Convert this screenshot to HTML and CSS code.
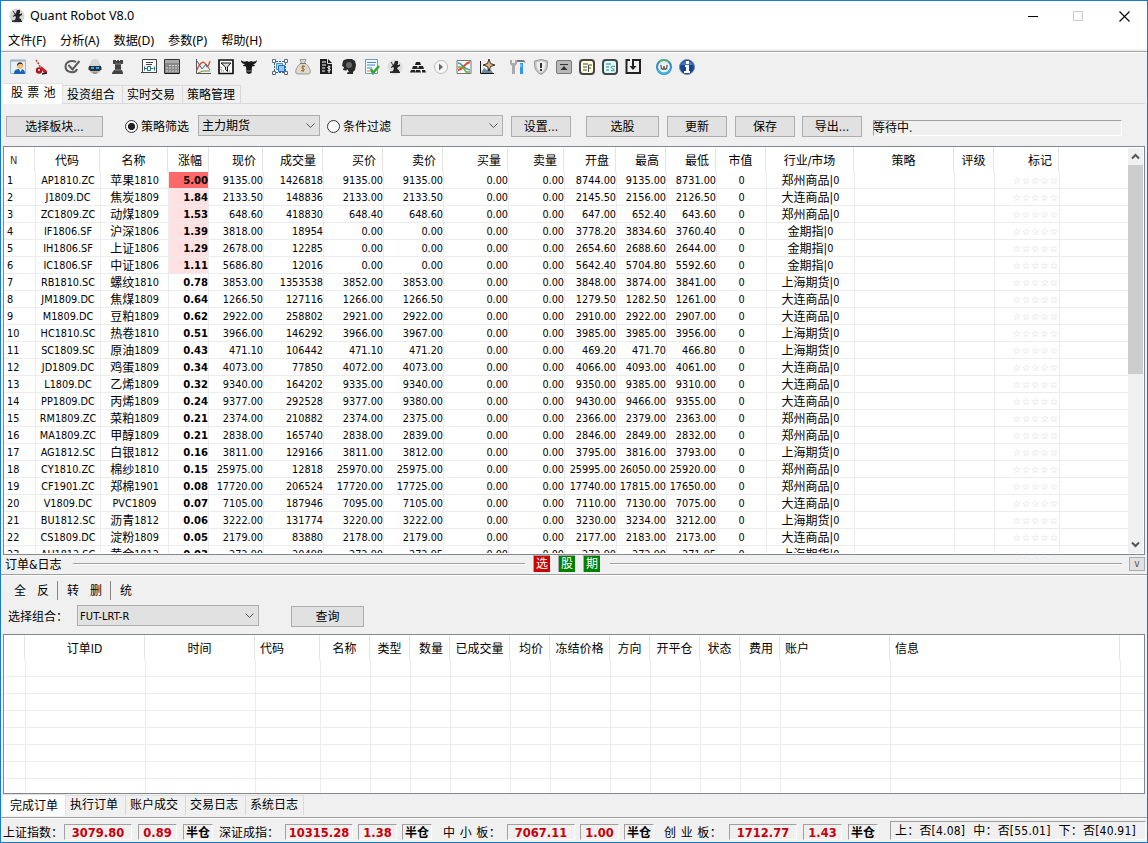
FILE: index.html
```html
<!DOCTYPE html>
<html lang="zh-CN">
<head>
<meta charset="utf-8">
<title>Quant Robot V8.0</title>
<link rel="stylesheet" href="styles.css">
</head>
<body>
<div class="window">
  <header class="titlebar">
    <svg class="app-icon" viewBox="0 0 16 16"><circle cx="8" cy="8" r="7.500" fill="#d6d6d6"/><path d="M8 2h3v3l-1 1h2l1-1v2l-2 1-1 2 2 1v2h1v1H3v-1l3-1 1-3-1-1-2 1V8l2-2 1-1z" fill="#222"/><path d="M4 3l2 3M3 13h10" stroke="#333" fill="none"/></svg>
    <span class="title">Quant Robot V8.0</span>
    <svg class="sys min" viewBox="0 0 11 11"><path d="M0 5.500h10" stroke="#000" fill="none"/></svg>
    <svg class="sys max" viewBox="0 0 11 11"><path d="M.5.500h9v9h-9z" stroke="#ccc" fill="none"/></svg>
    <svg class="sys close" viewBox="0 0 11 11"><path d="M.5.500l10 10M10.500.500l-10 10" stroke="#000" stroke-width="1.100" fill="none"/></svg>
  </header>
  <nav class="menu"><span>文件(F)</span><span>分析(A)</span><span>数据(D)</span><span>参数(P)</span><span>帮助(H)</span></nav>
  <div class="toolbar">
    <div class="group">
      <svg viewBox="0 0 16 16"><path d="M.5 1.500h15v13H.5z" fill="#e8f1f8" stroke="#9fb4c4"/><path d="M.5.500h15v2H.5z" fill="#9fb0bd"/><path d="M4 15c0-4 2-5 6-5s5 2 5 5z" fill="#1763b5"/><path d="M9 10l1.500 3L12 10z" fill="#fff"/><circle cx="10" cy="7" r="3" fill="#f0bd72"/><path d="M7 7c-.5-5 6.500-5 6 0l-1-2H9z" fill="#48301c"/></svg>
      <svg viewBox="0 0 16 16"><path d="M3 1l2 3 3 5" stroke="#c33" stroke-width="1.500" stroke-dasharray="2 1" fill="none"/><circle cx="6" cy="11.500" r="3.200" fill="#b5121b"/><circle cx="6" cy="11" r="1" fill="#fff"/><path d="M8 7l6 5v3l-3-1-3-4z" fill="#c4202a"/><path d="M9 15l5-1" stroke="#222" stroke-width="1.500"/></svg>
    </div>
    <div class="group">
      <svg viewBox="0 0 16 16"><path d="M12 3C9 1 2 1.500 1.500 7.500c0 6.500 10 7.500 11.500 2.500" fill="none" stroke="#5b5b5b" stroke-width="2"/><path d="M4.500 6l4 4.500L15.500 2" fill="none" stroke="#5b5b5b" stroke-width="2"/></svg>
      <svg viewBox="0 0 16 16"><circle cx="8" cy="9" r="6" fill="#b5b5b5"/><circle cx="8" cy="4.500" r="4.500" fill="#d8d8d8"/><path d="M1 8h14v3H1z" fill="#999"/><path d="M2 7h12v4l-2 1H4l-2-1z" fill="#283038"/><path d="M4 8h3v2H4zm5 0h3v2H9z" fill="#27aef2"/><path d="M6 14h4" stroke="#777"/></svg>
      <svg viewBox="0 0 16 16"><path d="M3 1h3v1h1V1h2v1h1V1h3v4h-2v6h1l1 3v1H2v-1l2-3h1V5H3z" fill="#424242"/><path d="M5 5h6M5 11h6" stroke="#888"/></svg>
    </div>
    <div class="group">
      <svg viewBox="0 0 16 16"><path d="M1.500.500h14v13h-14z" fill="#fff" stroke="#444"/><path d="M0 13.500h4m9 0h3M5 3.500h7M5 5.500h6" stroke="#444"/><path d="M3.500 7.500v4m0-2h3m0-2v4h3v-4h-3m3 2h3m1-2v4" stroke="#26777a" fill="none"/></svg>
      <svg viewBox="0 0 16 16"><path d="M.5.500h15v14H.5z" fill="#888" stroke="#333"/><path d="M1 1h14v3H1z" fill="#aaa"/><path d="M5 6.500h10M2 9h13M2 12h13" stroke="#ddd" stroke-dasharray="2 1"/><path d="M1 14.500h14" stroke="#111"/></svg>
    </div>
    <div class="group">
      <svg viewBox="0 0 16 16"><path d="M1.500 0v14.500H16" stroke="#555" fill="none"/><path d="M2 11c3-8 7-10 9-5 1 4 3 0 4-4" stroke="#e04c2d" stroke-width="1.300" fill="none"/><path d="M2 2l5 8 4-5 4 6" stroke="#27729d" fill="none"/><path d="M3 14l5-2h7" stroke="#6c8f36" fill="none"/></svg>
      <svg viewBox="0 0 16 16"><path d="M1 1h14v13.500H1z" stroke="#111" stroke-width="1.700" fill="#fff"/><path d="M3 4h10L9.500 8v4.500l-2-2V8z" stroke="#111" fill="#ddd"/><path d="M3 8v4h3m5 0h2" stroke="#666" fill="none" stroke-dasharray="1 1"/></svg>
      <svg viewBox="0 0 16 16"><path d="M0 1c2 2 4 2 6 1l2 1 2-1c2 1 4 1 6-1-.2 3-2 4-4 4 1 1 2 1 2 2l-3 .5L10.500 14 8 15l-2.500-1L5 7.500 2 7c0-1 1-1 2-2C2 5 0 4 0 1z" fill="#171717"/><path d="M6 12h4" stroke="#888"/></svg>
    </div>
    <div class="group">
      <svg viewBox="0 0 16 16"><path d="M4 2.500h8M4 13.500h8M2.500 4v8m11-8v8" stroke="#456682" stroke-dasharray="2 1" fill="none"/><path d="M4.500 4.500h6v6h-6z" fill="#b5def2" stroke="#4a96c0"/><path d="M6.500 6.500h6v6h-6z" fill="#9bc9f2" stroke="#1d70c4"/><path d="M.5.500h3v3h-3zm12 0h3v3h-3zm-12 12h3v3h-3zm12 0h3v3h-3z" fill="#fff" stroke="#5a6b7d"/></svg>
      <svg viewBox="0 0 16 16"><path d="M5 .5h6L9.500 4C14 6 18 15 13 15H3C-2 15 2 6 6.500 4z" fill="#ddd9cd" stroke="#999"/><path d="M5 4.500h6" stroke="#777"/><path d="M10 7.500c-4-1-4 1.500-2 2s2 3-2 2M8 6v7" stroke="#9c6424" fill="none"/></svg>
      <svg viewBox="0 0 16 16"><path d="M2 0h8l4 4v11H2z" fill="#1d1d1d"/><path d="M4 3h4M4 6h4M4 9h3M4 12h3" stroke="#fff"/><path d="M9.500 0v4.500H14" stroke="#ddd" fill="none"/><path d="M12.500 8c-3.500-1-3.500 1-1.500 1.500s2 3-1.500 2M11 6.500V14" stroke="#fff" fill="none"/></svg>
      <svg viewBox="0 0 16 16"><path d="M3 1l3-1h5l3 2 1 4-1 5-2 2v2H6l1-3-5-1 1-3-2-1 1-5z" fill="#292929"/><circle cx="8" cy="6" r="3" fill="#686868"/><path d="M6 10l-1 3h3" fill="#f0f0f0"/></svg>
      <svg viewBox="0 0 16 16"><path d="M1.500.500h12v14h-12z" fill="#eff7ff" stroke="#739bc1"/><path d="M3 3.500h9M3 6h8M3 9h5" stroke="#4d87bd"/><path d="M3 12h4" stroke="#d84"/><path d="M7 10l2 4 6-7" stroke="#39a638" stroke-width="2.500" fill="none"/></svg>
      <svg viewBox="0 0 16 16"><circle cx="8" cy="8" r="7.500" fill="#ddd"/><path d="M8 2h3v3l-1 1h2l1-1v2l-2 1-1 2 2 1v2h1v1H3v-1l3-1 1-3-1-1-2 1V8l2-2 1-1z" fill="#222"/><path d="M4 3l2 3M3 13h10" stroke="#333"/></svg>
      <svg viewBox="0 0 16 16"><path d="M6 3h4l1 3H5zM3 7h4l1 3H2zm6 0h4l1 3H8zM1 11h4l1 2.500H0zm5 0h4l1 2.500H6zm6 0h3l1 2.500h-4z" fill="#222"/></svg>
      <svg viewBox="0 0 16 16"><circle cx="8" cy="8" r="6.500" fill="#f7f7f7" stroke="#bbb"/><path d="M6 4.500l4 3.500-4 3.500z" fill="#666"/></svg>
      <svg viewBox="0 0 16 16"><path d="M1 1.500h14v13H1z" fill="#fff" stroke="#777"/><path d="M2 4c5 0 5 6 12 7" stroke="#3399bd" stroke-width="1.500" fill="none"/><path d="M2 11c5 0 6-7 12-8" stroke="#e3482d" stroke-width="2" fill="none"/><path d="M2 8h5l3 5h4" stroke="#6bad37" stroke-width="1.500" fill="none"/></svg>
      <svg viewBox="0 0 16 16"><path d="M1.500 2v12.500H15" stroke="#111" fill="none"/><path d="M2 14l3-5 3 2 2-3 4 6z" fill="#6f899a"/><path d="M10 0l1.500 4.500L16 6l-4.500 1.500L10 12 8.500 7.500 4 6l4.500-1.500z" fill="#deb176" stroke="#111" stroke-width=".8"/></svg>
    </div>
    <div class="group">
      <svg viewBox="0 0 16 16"><path d="M0 1v4l2 2v8h3V7l2-2V1H5v3H2V1z" fill="#aaa"/><path d="M7 1h7l2 3-2-1H7z" fill="#777"/><path d="M10 4h3v11h-3z" fill="#3098ea"/><path d="M11 5v3" stroke="#b8dbf6"/></svg>
      <svg viewBox="0 0 16 16"><path d="M8 .5L14.500 2c0 6 0 10-6.500 13.500C1.500 12 1.500 8 1.500 2z" fill="#c6c6c6" stroke="#999"/><path d="M8 2l4.500 1.500C12.500 8 12 11 8 13.500 4 11 3.500 8 3.500 3.500z" fill="#eee"/><path d="M8 4v5m0 1v2" stroke="#333" stroke-width="2"/></svg>
      <svg viewBox="0 0 16 16"><rect x=".5" y="1.500" width="15" height="13" rx="1.500" fill="#b8b8b8" stroke="#777"/><path d="M4 5.500h8" stroke="#333"/><path d="M4.500 11h7L8 7z" fill="#333"/></svg>
      <svg viewBox="0 0 16 16"><rect x="1" y="1" width="14" height="14" rx="3" fill="#ffffdb" stroke="#444" stroke-width="2"/><path d="M4 5h5M4 8h4M4 11h4M9.500 13V6H13M9.500 9H12" stroke="#444" fill="none"/></svg>
      <svg viewBox="0 0 16 16"><rect x="1" y="1" width="14" height="14" rx="3" fill="#dafffe" stroke="#444" stroke-width="2"/><path d="M4 5h5M4 8h3M4 11h3M13 7.500c-4-1-5 1-2.500 2s3 3-1.500 2" stroke="#36787e" fill="none"/></svg>
      <svg viewBox="0 0 16 16"><path d="M5 1H1.500v13H15V1H8v7" stroke="#222" stroke-width="2" fill="none"/><path d="M4.500 7h7L8 11z" fill="#222"/></svg>
    </div>
    <div class="group">
      <svg viewBox="0 0 16 16"><circle cx="8" cy="8" r="7" fill="#eee" stroke="#2d8bd0" stroke-width="2"/><path d="M2 10c2 6 10 6 12 0" stroke="#3cb2de" stroke-width="2" fill="none"/><path d="M3 3c3-3 8-2 10 0" stroke="#60b95b" stroke-width="1.500" fill="none"/><path d="M5 6c0 6 3 5 3 1 0 4 3 5 3-1" stroke="#555" stroke-width="1.300" fill="none"/></svg>
      <svg viewBox="0 0 16 16"><circle cx="8" cy="8" r="7.500" fill="#17468d" stroke="#6d8eb8"/><path d="M2 6c1-5 11-5 12 0z" fill="#4978b3"/><path d="M7 2h3v3H7zM6 6h4v6h1v2H5v-2h2V8H6z" fill="#fff"/></svg>
    </div>
  </div>
  <div class="tabs"><span class="tab active first">股 票 池</span><span class="tab">投资组合</span><span class="tab">实时交易</span><span class="tab last">策略管理</span><span class="tabline"></span></div>
  <div class="filters">
    <span class="button w97">选择板块...</span>
    <span class="radio on"></span><span class="radio-label">策略筛选</span>
    <span class="select w122">主力期货<svg viewBox="0 0 9 5"><path d="M.5.500l4 4 4-4" fill="none" stroke="#555"/></svg></span>
    <span class="radio second"></span><span class="radio-label">条件过滤</span>
    <span class="select w102 blank"><svg viewBox="0 0 9 5"><path d="M.5.500l4 4 4-4" fill="none" stroke="#555"/></svg></span>
    <span class="button w60 b1">设置...</span><span class="button w73 b2">选股</span><span class="button w60 b1">更新</span><span class="button w60 b1">保存</span><span class="button w60 b3">导出...</span>
    <span class="sunken state">等待中.</span>
  </div>
  <div class="list quotes">
    <div class="list-main">
      <div class="head qgrid"><span class="n">N</span><span class="c">代码</span><span class="c">名称</span><span>涨幅</span><span>现价</span><span>成交量</span><span>买价</span><span>卖价</span><span>买量</span><span>卖量</span><span>开盘</span><span>最高</span><span>最低</span><span class="c">市值</span><span class="c">行业/市场</span><span class="c">策略</span><span class="c">评级</span><span>标记</span></div>
      <div class="body" id="quotes"></div>
    </div>
    <div class="scroll"><svg viewBox="0 0 15 17"><path d="M4 10.500L7.500 7l3.500 3.500" fill="none" stroke="#555" stroke-width="2"/></svg><div class="thumb"></div><svg class="down" viewBox="0 0 15 17"><path d="M4 6.500L7.500 10 11 6.500" fill="none" stroke="#555" stroke-width="2"/></svg></div>
  </div>
  <div class="splitter"><span class="split-name">订单&amp;日志</span><span class="rule r1"></span><span class="badge red">选</span><span class="badge">股</span><span class="badge">期</span><span class="rule r2"></span><span class="fold">v</span></div>
  <div class="minibar"><span>全</span><span>反</span><i></i><span>转</span><span>删</span><i></i><span>统</span></div>
  <div class="query"><span class="query-label">选择组合：</span><span class="select w182">FUT-LRT-R<svg viewBox="0 0 9 5"><path d="M.5.500l4 4 4-4" fill="none" stroke="#555"/></svg></span><span class="button w73 qbtn">查询</span></div>
  <div class="list orders">
    <div class="list-main">
      <div class="head ogrid"><span></span><span class="c">订单ID</span><span class="c">时间</span><span class="l">代码</span><span class="c">名称</span><span class="c">类型</span><span>数量</span><span class="c">已成交量</span><span>均价</span><span class="c">冻结价格</span><span class="c">方向</span><span class="c">开平仓</span><span class="c">状态</span><span>费用</span><span class="l">账户</span><span class="l">信息</span></div>
      <div class="body" id="orders"></div>
    </div>
  </div>
  <div class="tabs bottom"><span class="tab active">完成订单</span><span class="tab">执行订单</span><span class="tab">账户成交</span><span class="tab">交易日志</span><span class="tab last">系统日志</span></div>
  <footer class="status">
    <div class="index sh"><span class="name">上证指数：</span><b class="sunken val">3079.80</b><b class="sunken chg">0.89</b><b class="sunken pos">半仓</b></div>
    <div class="index sz"><span class="name">深证成指：</span><b class="sunken val">10315.28</b><b class="sunken chg">1.38</b><b class="sunken pos">半仓</b></div>
    <div class="index zx"><span class="name">中 小 板：</span><b class="sunken val">7067.11</b><b class="sunken chg">1.00</b><b class="sunken pos">半仓</b></div>
    <div class="index cy"><span class="name">创 业 板：</span><b class="sunken val">1712.77</b><b class="sunken chg">1.43</b><b class="sunken pos">半仓</b></div>
    <span class="sunken summary"><span>上：否[4.08]</span><span>中：否[55.01]</span><span>下：否[40.91]</span></span>
  </footer>
</div>
<script src="app.js"></script>
</body>
</html>
```
FILE: styles.css
```css
* { box-sizing: border-box; }
body { margin: 0; }
.window {
  width: 1148px; height: 843px; overflow: hidden;
  display: flex; flex-direction: column;
  border: 1px solid #1979ca;
  background: #f0f0f0; color: #000;
  font: 12px/16px "DejaVu Sans Condensed", "Noto Sans CJK SC", sans-serif;
  white-space: nowrap;
}
svg { display: block; flex: none; }

.titlebar { height: 30px; flex: none; display: flex; align-items: center; padding: 0 13px 0 8px; background: #fff; }
.app-icon { width: 16px; height: 16px; }
.title { margin-left: 5px; flex: 1; font: 12.600px/16px "Noto Sans", sans-serif; }
.sys { width: 11px; height: 11px; }
.max { margin-left: 34px; }
.close { margin-left: 35px; margin-right: 4px; }
.menu { height: 18px; flex: none; padding-left: 7px; display: flex; gap: 14px; background: #fff; font: 12.200px/20px "Noto Sans", "Noto Sans CJK SC", sans-serif; }

.toolbar { height: 35px; flex: none; margin-top: 2px; padding: 7px 0 0 9px; display: flex; gap: 15px; border-top: 1px solid #a0a0a0; box-shadow: inset 0 1px #fff; }
.group { display: flex; gap: 7px; }
.group svg { width: 16px; height: 16px; }

.tabs { display: flex; height: 20px; flex: none; margin-top: -2px; padding-left: 2px; align-items: flex-end; }
.tab { width: 60px; height: 19px; padding-left: 4px; line-height: 19px; border: 1px solid #d9d9d9; border-left: 0; }
.tab.active { height: 21px; background: #fff; border-color: #e3e3e3; border-bottom: 0; }
.tab.first { width: 60px; padding-left: 8px; letter-spacing: .4px; }
.tab.last { width: 58px; }
.tabline { flex: 1; margin-right: 2px; border-bottom: 1px solid #d9d9d9; }

.filters { height: 42px; flex: none; padding: 12px 0 0 5px; display: flex; align-items: flex-start; }
.button { height: 21px; flex: none; border: 1px solid #adadad; background: #e1e1e1; line-height: 20px; text-align: center; }
.select { height: 21px; flex: none; border: 1px solid #adadad; background: #e1e1e1; padding: 0 4px 0 3px; display: flex; justify-content: space-between; line-height: 20px; }
.select svg { width: 9px; height: 5px; align-self: center; }
.select.blank { justify-content: flex-end; }
.w97 { width: 97px; } .w60 { width: 60px; } .w73 { width: 73px; }
.w122 { width: 122px; } .w102 { width: 102px; }
.w182 { width: 182px; font-size: 11px; letter-spacing: .1px; line-height: 21px; padding-left: 2px; }
.radio { width: 13px; height: 13px; margin: 4px 3px 0 22px; border: 1px solid #333; border-radius: 50%; background: #fff; flex: none; }
.radio.on { background: radial-gradient(circle, #222 0 3.200px, #fff 4px); }
.radio.second { margin-left: 7px; }
.radio-label { width: 57px; margin-top: 3px; flex: none; }
.filters .select { margin-top: -1px; }
.filters .blank { margin-left: 1px; }
.b1 { margin-left: 8px; } .b2 { margin-left: 15px; } .b3 { margin-left: 7px; }
.sunken { border: 1px solid #a0a0a0; border-right-color: #fff; border-bottom-color: #fff; }
.state { width: 249px; height: 16px; margin: 4px 0 0 11px; line-height: 15px; text-indent: -1px; }

.list { margin: 0 2px; border: 1px solid #828790; background: #fff; display: flex; overflow: hidden; flex: none; }
.quotes { height: 409px; padding-bottom: 1px; }
.list-main { flex: 1; overflow: hidden; }
.head { display: grid; height: 25px; }
.head span { border-right: 1px solid #e5e5e5; padding-right: 6px; line-height: 28px; text-align: right; overflow: hidden; }
.head .c { text-align: center; padding: 0; }
.head .l { text-align: left; padding-left: 5px; }
.head .n { color: #5c2a14; text-align: left; padding-left: 6px; font-size: 11px; }
.qgrid { grid-template-columns: 31px 65px 68px 41px 54px 60px 60px 60px 65px 56px 52px 50px 50px 50px 88px 100px 40px 65px; }
.ogrid { grid-template-columns: 21px 120px 110px 65px 50px 40px 40px 60px 40px 60px 40px 50px 40px 40px 110px 230px; }
.row { display: grid; height: 17px; padding-left: 1px; border-bottom: 1px solid #ececec; }
.row.qgrid { grid-template-columns: 31px 65px 68px 40px 55px 60px 60px 60px 65px 56px 52px 50px 50px 50px 88px 100px 40px 65px; }
.row span { border-right: 1px solid #ececec; height: 17px; line-height: 18px; font-size: 10.800px; text-align: right; }
.row .num { text-align: left; padding-left: 2px; }
.row .c { text-align: center; }
.row .market, .row .label { font-size: 12px; }
.row small { font-size: 10.800px; line-height: 0; vertical-align: 1px; }
.row .pct { font-weight: bold; font-size: 11.200px; }
.row .hot, .row .warm { height: 16px; }
.row .hot { background: #ff6868; }
.row .warm { background: #ffe1e1; }
.row .stars { color: #d4d4d8; font-size: 9.500px; font-family: "DejaVu Sans", sans-serif; letter-spacing: .800px; }
.scroll { width: 15px; margin: 1px 1px 0 0; background: #f0f0f0; display: flex; flex-direction: column; }
.scroll svg { width: 15px; height: 17px; }
.thumb { height: 209px; background: #cdcdcd; }
.down { margin-top: auto; }

.splitter { height: 20px; display: flex; align-items: flex-start; padding-left: 4px; border-bottom: 1px solid #a0a0a0; box-shadow: 0 1px #fff; flex: none; }
.split-name { width: 68px; line-height: 20px; }
.rule { height: 2px; margin-top: 8px; border-top: 1px solid #a0a0a0; border-bottom: 1px solid #fff; }
.r1 { width: 452px; margin-right: 8px; }
.r2 { width: 512px; margin-left: 2px; }
.badge { width: 17px; height: 17px; margin-right: 8px; line-height: 17px; text-align: center; background: #008000; color: #fff; border: 1px solid #aaa; border-width: 1px 0 0 1px; }
.badge.red { background: #cc0000; }
.fold { width: 16px; height: 14px; margin: 2px 0 0 7px; border: 1px solid #adadad; background: #e1e1e1; text-align: center; font-size: 10px; line-height: 12px; color: #555; }
.minibar { height: 30px; flex: none; padding: 6px 0 0 13px; display: flex; gap: 11px; line-height: 20px; }
.minibar i { width: 1px; height: 19px; background: #888; margin: 0 -2px 0 -3px; }
.query { height: 29px; display: flex; padding-left: 7px; flex: none; }
.query-label { width: 69px; line-height: 25px; }
.qbtn { margin: 1px 0 0 32px; }
.orders { height: 160px; }
.bottom { height: 23px; margin-top: 0; align-items: flex-start; border-bottom: 0; }
.bottom .tab { margin-top: 1px; height: 20px; border-top-color: #e0e0e0; border-bottom: 0; }
.bottom .active { width: 63px; height: 22px; margin-top: 0; padding-left: 7px; line-height: 23px; }

.status { flex: 1; display: flex; padding: 3px 0 0 2px; border-top: 1px solid #a0a0a0; box-shadow: inset 0 1px #fff; }
.index { display: flex; margin-top: 3px; }
.name { line-height: 19px; }
.sh .name { width: 61px; }
.sz .name { width: 72px; padding-left: 6px; }
.zx .name, .cy .name { width: 75px; padding-left: 11px; letter-spacing: .600px; }
.cy .name { padding-left: 10px; }
.index b { height: 16px; line-height: 15px; text-align: center; }
.val { width: 68px; font-size: 12.800px; color: #c8000a; }
.chg { width: 39px; margin: 0 5px; font-size: 12.800px; color: #c8000a; }
.sh .chg, .cy .chg { margin: 0 6px; }
.index .pos { width: 30px; line-height: 17px; }
.summary { width: 256px; height: 19px; margin: 0 0 0 12px; padding-left: 4px; line-height: 18px; display: flex; gap: 8px; letter-spacing: .2px; }
```
FILE: app.js
```js
// code, name, contract, change, last, volume, bid, ask, open, high, low, market
const quotes = `AP1810.ZC,苹果,1810,5.00,9135.00,1426818,9135.00,9135.00,8744.00,9135.00,8731.00,郑州商品
J1809.DC,焦炭,1809,1.84,2133.50,148836,2133.00,2133.50,2145.50,2156.00,2126.50,大连商品
ZC1809.ZC,动煤,1809,1.53,648.60,418830,648.40,648.60,647.00,652.40,643.60,郑州商品
IF1806.SF,沪深,1806,1.39,3818.00,18954,0.00,0.00,3778.20,3834.60,3760.40,金期指
IH1806.SF,上证,1806,1.29,2678.00,12285,0.00,0.00,2654.60,2688.60,2644.00,金期指
IC1806.SF,中证,1806,1.11,5686.80,12016,0.00,0.00,5642.40,5704.80,5592.60,金期指
RB1810.SC,螺纹,1810,0.78,3853.00,1353538,3852.00,3853.00,3848.00,3874.00,3841.00,上海期货
JM1809.DC,焦煤,1809,0.64,1266.50,127116,1266.00,1266.50,1279.50,1282.50,1261.00,大连商品
M1809.DC,豆粕,1809,0.62,2922.00,258802,2921.00,2922.00,2910.00,2922.00,2907.00,大连商品
HC1810.SC,热卷,1810,0.51,3966.00,146292,3966.00,3967.00,3985.00,3985.00,3956.00,上海期货
SC1809.SC,原油,1809,0.43,471.10,106442,471.10,471.20,469.20,471.70,466.80,上海期货
JD1809.DC,鸡蛋,1809,0.34,4073.00,77850,4072.00,4073.00,4066.00,4093.00,4061.00,大连商品
L1809.DC,乙烯,1809,0.32,9340.00,164202,9335.00,9340.00,9350.00,9385.00,9310.00,大连商品
PP1809.DC,丙烯,1809,0.24,9377.00,292528,9377.00,9380.00,9430.00,9466.00,9355.00,大连商品
RM1809.ZC,菜粕,1809,0.21,2374.00,210882,2374.00,2375.00,2366.00,2379.00,2363.00,郑州商品
MA1809.ZC,甲醇,1809,0.21,2838.00,165740,2838.00,2839.00,2846.00,2849.00,2832.00,郑州商品
AG1812.SC,白银,1812,0.16,3811.00,129166,3811.00,3812.00,3795.00,3816.00,3793.00,上海期货
CY1810.ZC,棉纱,1810,0.15,25975.00,12818,25970.00,25975.00,25995.00,26050.00,25920.00,郑州商品
CF1901.ZC,郑棉,1901,0.08,17720.00,206524,17720.00,17725.00,17740.00,17815.00,17650.00,郑州商品
V1809.DC,,PVC1809,0.07,7105.00,187946,7095.00,7105.00,7110.00,7130.00,7075.00,大连商品
BU1812.SC,沥青,1812,0.06,3222.00,131774,3220.00,3222.00,3230.00,3234.00,3212.00,上海期货
CS1809.DC,淀粉,1809,0.05,2179.00,83880,2178.00,2179.00,2177.00,2183.00,2173.00,大连商品
AU1812.SC,黄金,1812,0.03,272.90,20498,272.90,272.95,272.90,272.90,271.95,上海期货`.split('\n');

document.getElementById('quotes').innerHTML = quotes.map((line, i) => {
  const [code, name, term, pct, last, vol, bid, ask, open, high, low, market] = line.split(',');
  const tone = pct >= 5 ? 'hot' : pct >= 1 ? 'warm' : '';
  const num = v => `<span>${v}</span>`;
  return `<div class="row qgrid"><span class="num">${i + 1}</span><span class="c">${code}</span>` +
    `<span class="c label">${name}<small>${term}</small></span><span class="pct ${tone}">${pct}</span>` +
    [last, vol, bid, ask, '0.00', '0.00', open, high, low].map(num).join('') +
    `<span class="c">0</span><span class="c market">${market}|<small>0</small></span><span></span><span></span><span class="stars">☆☆☆☆☆</span></div>`;
}).join('');

document.getElementById('orders').innerHTML =
  Array(8).fill('<div class="row ogrid">' + '<span></span>'.repeat(16) + '</div>').join('');
```
